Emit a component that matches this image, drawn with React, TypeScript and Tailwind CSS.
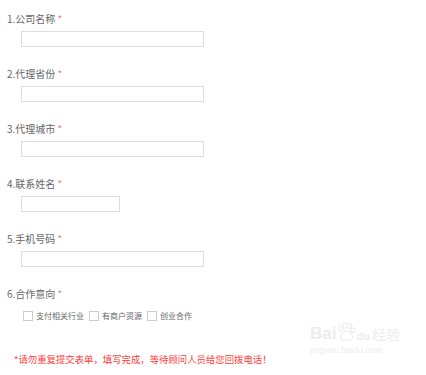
import React from "react";

const font = { fontFamily: '"Noto Sans CJK SC", "Noto Sans", sans-serif' };

function Field({ n, label, short }: { n: number; label: string; short?: boolean }) {
  return (
    <div className="flex flex-col">
      <div className="h-[14px] leading-[14px] text-[10px] text-[#666]">
        {n}.{label} <span className="text-[#f27a7a]">*</span>
      </div>
      <div
        className={`mt-[5px] ml-[14px] h-[16px] border border-[#dedede] bg-white ${
          short ? "w-[99px]" : "w-[183px]"
        }`}
      />
    </div>
  );
}

function Check({ label }: { label: string }) {
  return (
    <div className="flex items-center gap-[3px]">
      <div className="w-[10px] h-[10px] border border-[#ccc] bg-white" />
      <span className="text-[8px] leading-[12px] text-[#666]">{label}</span>
    </div>
  );
}

export default function App() {
  return (
    <div className="relative w-[426px] h-[375px] bg-white overflow-hidden" style={font}>
      <div className="flex flex-col pl-[7px] pt-[12px] gap-[20px]">
        <Field n={1} label="公司名称" />
        <Field n={2} label="代理省份" />
        <Field n={3} label="代理城市" />
        <Field n={4} label="联系姓名" short />
        <Field n={5} label="手机号码" />
        <div className="flex flex-col">
          <div className="h-[14px] leading-[14px] text-[10px] text-[#666]">
            6.合作意向 <span className="text-[#f27a7a]">*</span>
          </div>
          <div className="mt-[9px] ml-[16px] flex items-center gap-[5px]">
            <Check label="支付相关行业" />
            <Check label="有商户资源" />
            <Check label="创业合作" />
          </div>
        </div>
      </div>
      <div className="mt-[31px] pl-[14px] text-[9.4px] leading-[12px] text-[#ff3b3b]">
        *请勿重复提交表单，填写完成，等待顾问人员给您回拨电话！
      </div>
      <div className="absolute left-[310px] top-[322px] flex flex-col items-start text-[#ececec]">
        <div className="flex items-end">
          <span className="text-[17px] leading-[18px] font-bold" style={{ fontFamily: '"Liberation Sans", sans-serif' }}>
            Bai
          </span>
          <svg width="20" height="20" viewBox="0 0 22 22" className="mb-[1px]">
            <g fill="none" stroke="#ececec" strokeWidth="1.2">
              <ellipse cx="5" cy="7" rx="2" ry="3" />
              <ellipse cx="10" cy="4" rx="2" ry="3" />
              <ellipse cx="15" cy="4.5" rx="2" ry="3" />
              <ellipse cx="19" cy="9" rx="2" ry="2.6" />
              <path d="M5 18 C5 12 9 10 12 10 C16 10 19 14 18 18 C17 21 7 21 5 18 Z" />
            </g>
          </svg>
          <span className="text-[11px] leading-[13px] font-bold" style={{ fontFamily: '"Liberation Sans", sans-serif' }}>
            du
          </span>
          <span className="ml-[2px] text-[14px] leading-[18px]">经验</span>
        </div>
        <div className="text-[9px] leading-[11px] mt-[2px]" style={{ fontFamily: '"Liberation Sans", sans-serif' }}>
          jingyan.baidu.com
        </div>
      </div>
    </div>
  );
}
